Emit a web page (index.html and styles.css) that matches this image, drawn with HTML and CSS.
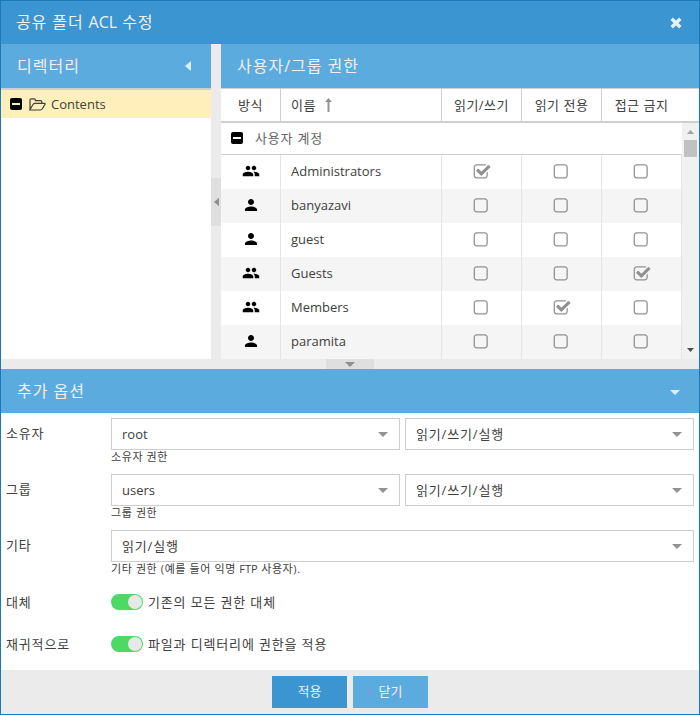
FILE: index.html
```html
<!DOCTYPE html>
<html lang="ko">
<head>
<meta charset="utf-8">
<title>공유 폴더 ACL 수정</title>
<link rel="stylesheet" href="styles.css">
</head>
<body>
<svg class="defs" aria-hidden="true">
  <symbol id="box" viewBox="0 0 1792 1792"><path d="M1184 256H352q-66 0-113 47t-47 113v832q0 66 47 113t113 47h832q66 0 113-47t47-113V416q0-66-47-113t-113-47zm288 160v832q0 119-84.500 203.500T1184 1536H352q-119 0-203.500-84.500T64 1248V416q0-119 84.500-203.500T352 128h832q119 0 203.500 84.500T1472 416z"/></symbol>
  <symbol id="checked" viewBox="0 0 1792 1792"><path d="M1472 930v318q0 119-84.500 203.500T1184 1536H352q-119 0-203.500-84.500T64 1248V416q0-119 84.500-203.500T352 128h832q63 0 117 25 15 7 18 23 3 17-9 29l-49 49q-10 10-23 10-3 0-9-2-23-6-45-6H352q-66 0-113 47t-47 113v832q0 66 47 113t113 47h832q66 0 113-47t47-113V994q0-13 9-22l64-64q10-10 23-10 6 0 12 3 20 8 20 29zm231-489l-814 814q-24 24-57 24t-57-24L345 825q-24-24-24-57t24-57l110-110q24-24 57-24t57 24l263 263 647-647q24-24 57-24t57 24l110 110q24 24 24 57t-24 57z"/></symbol>
  <symbol id="person" viewBox="0 0 24 24"><path d="M12 12c2.210 0 4-1.790 4-4s-1.790-4-4-4-4 1.790-4 4 1.790 4 4 4zm0 2c-2.670 0-8 1.340-8 4v2h16v-2c0-2.660-5.330-4-8-4z"/></symbol>
  <symbol id="people" viewBox="0 0 24 24"><path d="M16 11c1.660 0 2.990-1.340 2.990-3S17.660 5 16 5s-3 1.340-3 3 1.340 3 3 3zm-8 0c1.660 0 2.990-1.340 2.990-3S9.660 5 8 5 5 6.340 5 8s1.340 3 3 3zm0 2c-2.330 0-7 1.170-7 3.500V19h14v-2.500c0-2.330-4.670-3.500-7-3.500zm8 0c-.290 0-.620.020-.970.050 1.160.840 1.970 1.970 1.970 3.450V19h6v-2.500c0-2.330-4.670-3.500-7-3.500z"/></symbol>
  <symbol id="minus" viewBox="0 0 12 12"><path fill-rule="evenodd" d="M2 0h8a2 2 0 0 1 2 2v8a2 2 0 0 1-2 2H2a2 2 0 0 1-2-2V2a2 2 0 0 1 2-2zm0 5v2h8V5z"/></symbol>
  <symbol id="down" viewBox="0 0 10 5"><path d="M0 0h10L5 5z"/></symbol>
  <symbol id="left" viewBox="0 0 6 10"><path d="M6 0v10L0 5z"/></symbol>
</svg>

<div class="window">
  <header class="titlebar">
    <span class="heading">공유 폴더 <span class="latin">ACL</span> 수정</span>
    <svg class="close" viewBox="0 0 12 12"><path d="M1.700 1.700l8.600 8.600M10.300 1.700l-8.600 8.600"/></svg>
  </header>

  <div class="main">
    <section class="tree">
      <div class="panel-head"><span class="heading">디렉터리</span><svg class="collapse-left"><use href="#left"/></svg></div>
      <div class="node">
        <svg class="toggle"><use href="#minus"/></svg>
        <svg class="folder" viewBox="0 0 17 13"><path d="M1 11V2Q1 .8 2.200.8h3Q6.400.8 6.400 2v.6h5.200q1.200 0 1.200 1.200v1.500M1 11.400l3-4.900q.7-1.100 2-1.100h9.200q1.400 0 .7 1.100l-2.600 4.300q-.7 1.200-2 1.200H2.200Q1 12 1 11z"/></svg>
        <span class="latin">Contents</span>
      </div>
    </section>
    <div class="split-v"><div class="grip"><svg><use href="#left"/></svg></div></div>
    <section class="perms">
      <div class="panel-head"><span class="heading">사용자/그룹 권한</span></div>
      <div class="grid cols">
        <div class="center">방식</div>
        <div class="name">이름<svg class="sort" viewBox="0 0 7 14"><path d="M2.500 4H0L3.500 0 7 4H4.500v10h-2z"/></svg></div>
        <div class="center">읽기/쓰기</div><div class="center">읽기 전용</div><div class="center">접근 금지</div>
      </div>
      <div class="body">
        <div class="rows">
          <div class="group"><svg class="toggle"><use href="#minus"/></svg><span>사용자 계정</span></div>
          <div class="grid row"><div class="center"><svg class="who"><use href="#people"/></svg></div><div class="name">Administrators</div><div class="center"><svg class="chk"><use href="#checked"/></svg></div><div class="center"><svg class="chk"><use href="#box"/></svg></div><div class="center"><svg class="chk"><use href="#box"/></svg></div></div>
          <div class="grid row"><div class="center"><svg class="who"><use href="#person"/></svg></div><div class="name">banyazavi</div><div class="center"><svg class="chk"><use href="#box"/></svg></div><div class="center"><svg class="chk"><use href="#box"/></svg></div><div class="center"><svg class="chk"><use href="#box"/></svg></div></div>
          <div class="grid row"><div class="center"><svg class="who"><use href="#person"/></svg></div><div class="name">guest</div><div class="center"><svg class="chk"><use href="#box"/></svg></div><div class="center"><svg class="chk"><use href="#box"/></svg></div><div class="center"><svg class="chk"><use href="#box"/></svg></div></div>
          <div class="grid row"><div class="center"><svg class="who"><use href="#people"/></svg></div><div class="name">Guests</div><div class="center"><svg class="chk"><use href="#box"/></svg></div><div class="center"><svg class="chk"><use href="#box"/></svg></div><div class="center"><svg class="chk"><use href="#checked"/></svg></div></div>
          <div class="grid row"><div class="center"><svg class="who"><use href="#people"/></svg></div><div class="name">Members</div><div class="center"><svg class="chk"><use href="#box"/></svg></div><div class="center"><svg class="chk"><use href="#checked"/></svg></div><div class="center"><svg class="chk"><use href="#box"/></svg></div></div>
          <div class="grid row"><div class="center"><svg class="who"><use href="#person"/></svg></div><div class="name">paramita</div><div class="center"><svg class="chk"><use href="#box"/></svg></div><div class="center"><svg class="chk"><use href="#box"/></svg></div><div class="center"><svg class="chk"><use href="#box"/></svg></div></div>
        </div>
        <div class="scrollbar">
          <svg class="up" viewBox="0 0 7 4"><path d="M0 4h7L3.500 0z"/></svg>
          <div class="thumb"></div>
          <svg class="dn" viewBox="0 0 7 4"><path d="M0 0h7L3.500 4z"/></svg>
        </div>
      </div>
    </section>
  </div>

  <div class="split-h"><div class="grip"><svg><use href="#down"/></svg></div></div>

  <section class="options">
    <div class="panel-head"><span class="heading">추가 옵션</span><svg class="collapse-down"><use href="#down"/></svg></div>
    <div class="form">
      <div class="field">
        <label>소유자</label>
        <div class="control">
          <div class="combos"><div class="combo"><span class="latin">root</span><svg><use href="#down"/></svg></div><div class="combo"><span>읽기/쓰기/실행</span><svg><use href="#down"/></svg></div></div>
          <div class="hint">소유자 권한</div>
        </div>
      </div>
      <div class="field">
        <label>그룹</label>
        <div class="control">
          <div class="combos"><div class="combo"><span class="latin">users</span><svg><use href="#down"/></svg></div><div class="combo"><span>읽기/쓰기/실행</span><svg><use href="#down"/></svg></div></div>
          <div class="hint">그룹 권한</div>
        </div>
      </div>
      <div class="field">
        <label>기타</label>
        <div class="control">
          <div class="combos"><div class="combo"><span>읽기/실행</span><svg><use href="#down"/></svg></div></div>
          <div class="hint">기타 권한 (예를 들어 익명 <span class="latin">FTP</span> 사용자).</div>
        </div>
      </div>
      <div class="field switch-field"><label>대체</label><div class="switch"></div><span>기존의 모든 권한 대체</span></div>
      <div class="field switch-field"><label>재귀적으로</label><div class="switch"></div><span>파일과 디렉터리에 권한을 적용</span></div>
    </div>
  </section>

  <footer><button class="primary">적용</button><button>닫기</button></footer>
</div>
</body>
</html>
```
FILE: styles.css
```css
* { box-sizing: border-box; }
body {
  margin: 0;
  font: 13px/20px "Open Sans", "Noto Sans CJK KR", sans-serif;
  color: #404040;
  background: #fff;
}
svg { display: block; flex: none; fill: currentColor; }
.defs { position: absolute; width: 0; height: 0; }
.window {
  width: 700px;
  height: 715px;
  border: 1px solid #1b79b8;
  display: flex;
  flex-direction: column;
  overflow: hidden;
}
.titlebar, .panel-head {
  display: flex;
  align-items: center;
  justify-content: space-between;
  color: #f0f0f0;
  flex: none;
  white-space: nowrap;
}
.titlebar { height: 43px; background: #3b95d0; padding: 0 17px 0 15px; }
.panel-head { height: 44px; background: #5cabdf; padding: 0 18px 0 16px; }
.heading { font-size: 16px; line-height: 24px; letter-spacing: 1px; }
.heading .latin, .latin { letter-spacing: 0; }
.titlebar .heading { letter-spacing: .9px; margin-top: -1px; }
.close { width: 12px; height: 12px; stroke: #e5f1f9; stroke-width: 3.4; fill: none; }
.collapse-left { width: 6px; height: 10px; color: #deeef9; margin-right: 2px; }
.collapse-down { width: 10px; height: 5px; color: #deeef9; margin: 2px 1px 0 0; }

.main { display: flex; height: 315px; flex: none; }
.tree { width: 210px; }
.node {
  border-top: 2px solid #cfcfcf;
  height: 30px;
  background: #ffefbb;
  display: flex;
  align-items: center;
  padding-left: 9px;
}
.toggle { width: 12px; height: 12px; color: #000; }
.folder { width: 17px; height: 13px; margin: 0 5px 0 7px; fill: none; stroke: #404040; stroke-width: 1.2; }
.split-v { width: 10px; background: #ebebeb; display: flex; align-items: center; }
.split-v .grip { width: 10px; height: 48px; background: #dfdfdf; display: flex; align-items: center; justify-content: center; }
.grip { color: #8f8f8f; }
.split-v svg { width: 5px; height: 10px; }
.perms { flex: 1; display: flex; flex-direction: column; }
.grid { display: grid; grid-template-columns: 60px 161px 80px 80px 80px; }
.grid > div { display: flex; align-items: center; border-right: 1px solid #e4e4e4; white-space: nowrap; }
.grid .center { justify-content: center; }
.grid .name { padding-left: 10px; }
.cols { height: 35px; border-top: 1px solid #cfcfcf; border-bottom: 2px solid #cfcfcf; letter-spacing: .5px; }
.cols > div { border-right-color: #cfcfcf; padding-bottom: 1px; }
.cols > div:last-child { border-right-color: transparent; }
.sort { width: 7px; height: 14px; margin-left: 9px; color: #919191; }
.body { display: flex; height: 236px; }
.rows { width: 461px; }
.group {
  height: 32px;
  border-bottom: 1px solid #cfcfcf;
  display: flex;
  align-items: center;
  padding: 0 0 2px 10px;
  gap: 12px;
  color: #666;
  letter-spacing: .8px;
}
.row { height: 34px; }
.row:nth-child(odd) { background: #f5f5f5; }
.row .name { padding-bottom: 2px; }
.who { width: 18px; height: 18px; color: #000; margin-top: -2px; }
.chk { width: 18px; height: 18px; color: #919191; }
.scrollbar { width: 17px; background: #f1f1f1; display: flex; flex-direction: column; align-items: center; }
.scrollbar svg { width: 7px; height: 4px; }
.up { margin-top: 7px; color: #a3a3a3; }
.thumb { width: 13px; height: 17px; margin-top: 6px; background: #c1c1c1; }
.dn { margin: auto 0 7px; color: #505050; }

.split-h { height: 10px; background: #ebebeb; flex: none; }
.split-h .grip { width: 48px; height: 10px; margin: 0 auto; background: #dfdfdf; display: flex; align-items: center; justify-content: center; }
.split-h svg { width: 10px; height: 5px; }

.options { flex: 1; }
.form { padding: 5px 5px 0; letter-spacing: .85px; }
.field { display: flex; height: 56px; }
.field label { width: 105px; padding-top: 5px; flex: none; }
.control { flex: 1; }
.combos { display: flex; gap: 5px; }
.combo {
  flex: 1;
  height: 32px;
  border: 1px solid #cfcfcf;
  display: flex;
  align-items: center;
  justify-content: space-between;
  padding: 0 11px 0 10px;
}
.combo svg { width: 10px; height: 5px; margin-top: 1px; color: #919191; }
.hint { font-size: 11px; line-height: 14px; letter-spacing: .6px; }
.switch-field { height: 42px; align-items: flex-start; }
.switch {
  width: 32px;
  height: 16px;
  margin: 8px 5px 0 0;
  border-radius: 8px;
  background: #4cd964;
  display: flex;
  justify-content: flex-end;
  padding: 1px;
}
.switch::after { content: ""; width: 14px; height: 14px; border-radius: 50%; background: #e8e8e8; }
.switch-field label, .switch-field span { padding-top: 6px; }

footer { height: 44px; flex: none; background: #ebebeb; display: flex; justify-content: center; gap: 6px; padding: 6px 0; }
button {
  width: 75px;
  height: 32px;
  border: 0;
  padding: 0 0 2px;
  font: inherit;
  color: #f0f0f0;
  background: #5cabdf;
}
.primary { background: #3b95d0; }
```
